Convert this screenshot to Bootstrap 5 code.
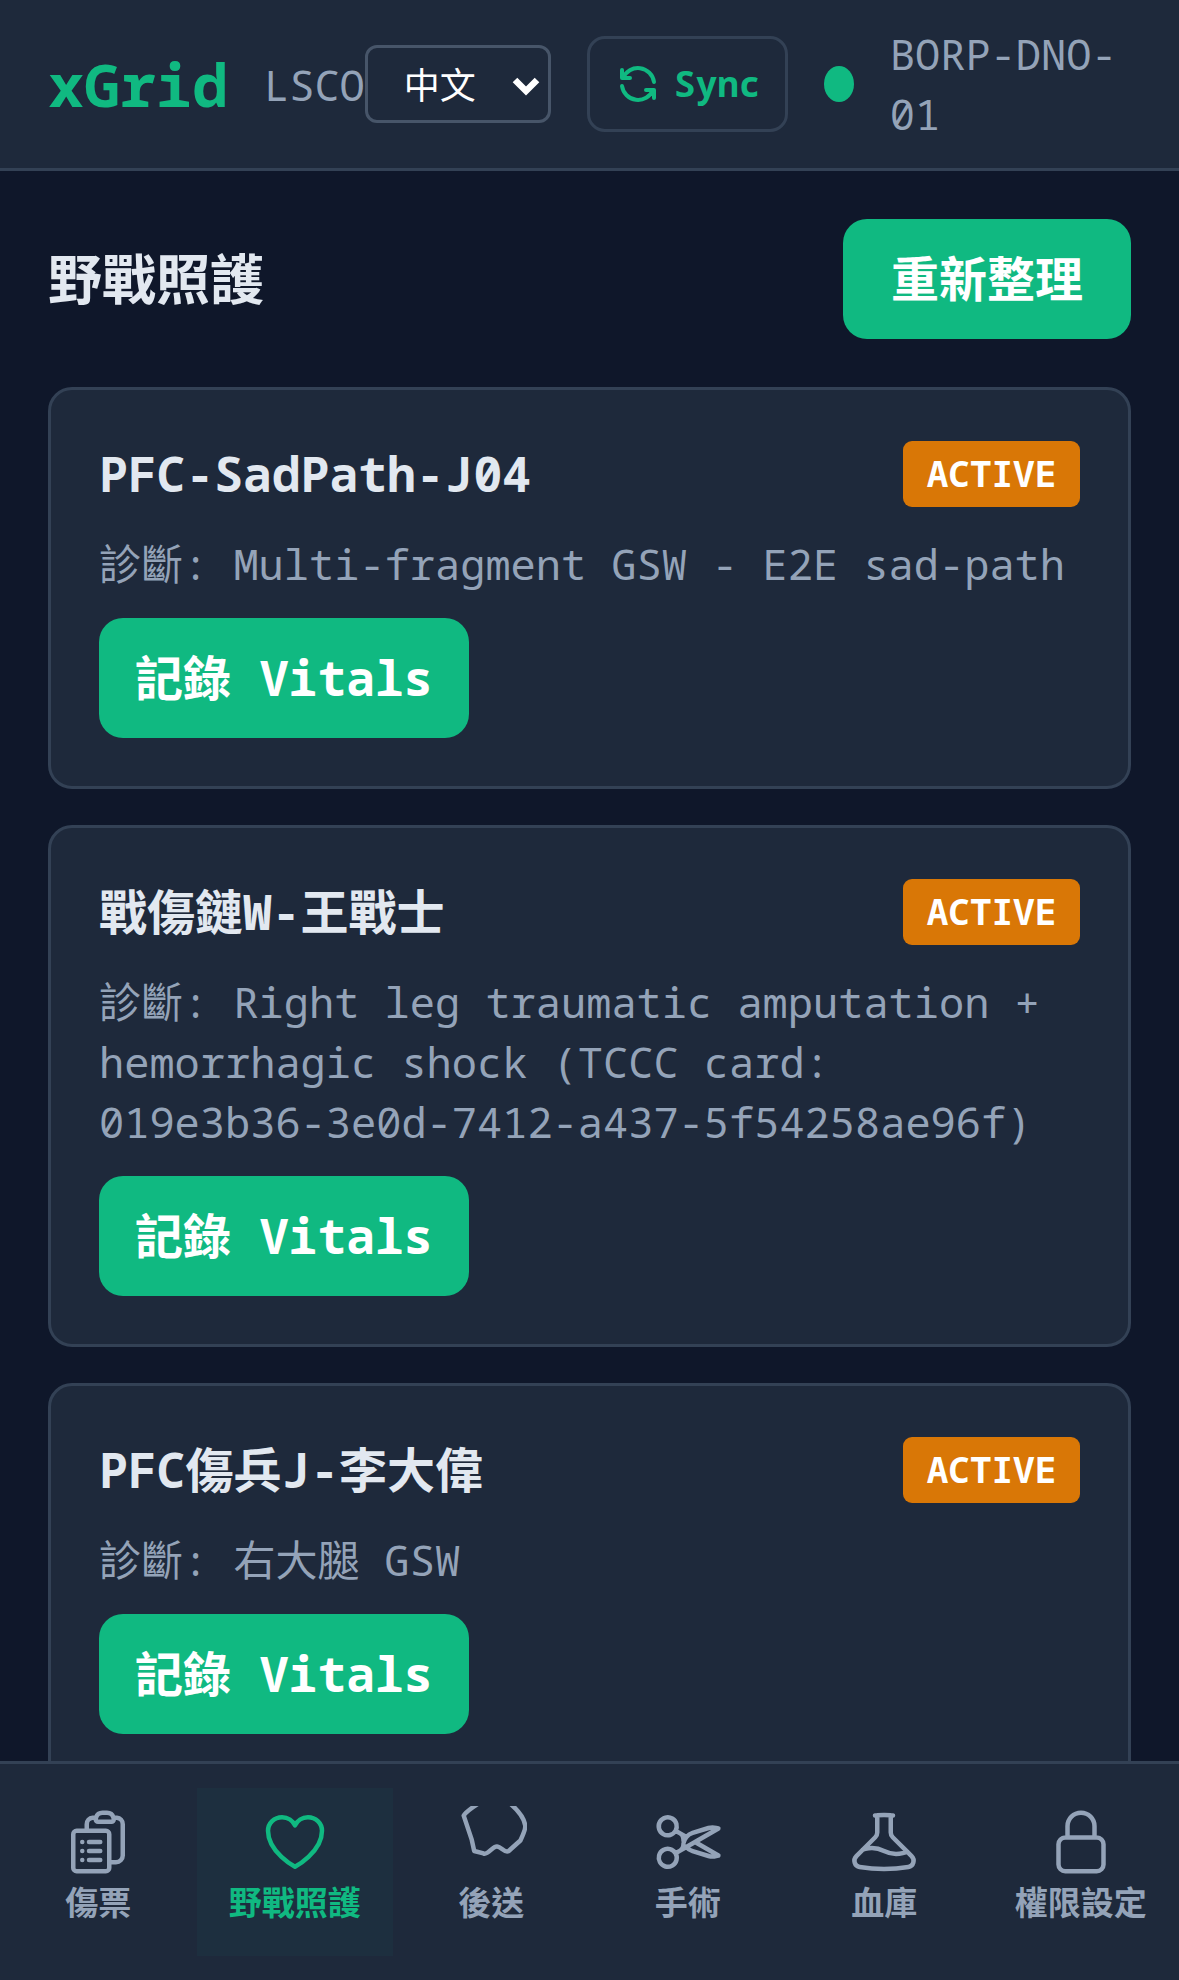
<!DOCTYPE html>
<html lang="zh-Hant"><head><meta charset="utf-8">
<link href="https://cdn.jsdelivr.net/npm/bootstrap@5.3.0/dist/css/bootstrap.min.css" rel="stylesheet">
<style>
html,body{height:100%;}
body{background:#0f172a;color:#e2e8f0;font-family:"Noto Sans Mono","Noto Sans Mono CJK TC","Noto Sans CJK TC",monospace;overflow:hidden;}
.app-shell{height:1980px;display:flex;flex-direction:column;}
.top-bar{height:171px;flex:none;background:#1e293b;border-bottom:3px solid #334155;padding:0 48px;}
.brand-side{gap:36px;flex:none;}
.brand-name{color:#10b981;font-size:60px;font-weight:700;line-height:1;}
.site-code{color:#94a3b8;font-size:42px;}
.ctrl-side{gap:36px;flex:1;min-width:0;}
.lang-wrap{position:relative;flex:none;}
.lang-pick{width:186px;height:78px;background-color:#1e293b;background-image:none;border:3px solid #475569;border-radius:12px;color:#fff;font-size:36px;padding:0 36px;-webkit-appearance:none;appearance:none;font-family:"Noto Sans CJK TC",sans-serif;line-height:1.2;}
.lang-caret{position:absolute;right:11px;top:31px;width:28px;height:20px;pointer-events:none;}
.sync-btn{width:201px;height:96px;flex:none;border:3px solid #334155;border-radius:18px;color:#10b981;font-size:36px;font-weight:700;gap:12px;background:transparent;padding:0;}
.sync-btn:hover{color:#10b981;border-color:#334155;}
.conn-dot{width:30px;height:36px;border-radius:50%;background:#10b981;flex:none;}
.node-name{color:#94a3b8;font-size:42px;line-height:60px;min-width:0;}
.main-scroll{flex:1;min-height:0;overflow:hidden;padding:48px;}
.page-title{font-size:54px;font-weight:700;margin:0;color:#e2e8f0;}
.action-btn{background:#10b981;border:0;color:#fff;font-weight:700;font-size:48px;border-radius:24px;height:120px;padding:0 36px;line-height:1;}
.action-btn:hover{background:#10b981;color:#fff;}
.refresh-btn{padding:0 48px;}
.care-card{background:#1e293b;border:3px solid #334155;border-radius:24px;padding:48px;margin-bottom:36px;}
.care-head{margin-bottom:24px;}
.care-name{font-size:48px;font-weight:700;color:#e2e8f0;margin:0;line-height:72px;}
.state-tag{background:#d97706;color:#fff;font-size:36px;font-weight:700;border-radius:9px;height:66px;width:177px;}
.diag-text{color:#94a3b8;font-size:42px;line-height:60px;margin:0 0 24px;}
.bottom-bar{flex:none;height:219px;background:#1e293b;border-top:3px solid #334155;padding:24px 0;}
.tab-item{flex:1 1 0;height:168px;padding-top:18px;color:#94a3b8;font-size:33px;font-weight:700;}
.tab-item svg{display:block;flex:none;}
.tab-on{background:rgba(16,185,129,.05);color:#10b981;}
.tab-label{line-height:49.5px;white-space:nowrap;}
</style></head><body>
<div class="app-shell">
<header class="top-bar d-flex align-items-center">
 <div class="brand-side d-flex align-items-center">
  <span class="brand-name">xGrid</span><span class="site-code">LSCO</span>
 </div>
 <div class="ctrl-side d-flex align-items-center">
 <div class="lang-wrap"><select class="lang-pick form-select"><option>中文</option></select>
  <svg class="lang-caret" viewBox="0 0 28 20"><path d="M3 4l11 11L25 4" fill="none" stroke="#fff" stroke-width="6.5"/></svg></div>
 <button class="sync-btn btn d-flex align-items-center justify-content-center">
  <svg width="48" height="48" viewBox="0 0 24 24" fill="none" stroke="#10b981" stroke-width="2" stroke-linecap="round" stroke-linejoin="round"><path d="M20 11a8.1 8.1 0 0 0-15.5-2m-.5-4v4h4"/><path d="M4 13a8.1 8.1 0 0 0 15.5 2m.5 4v-4h-4"/></svg>
  <span>Sync</span></button>
 <span class="conn-dot"></span>
 <span class="node-name">BORP-DNO-01</span>
 </div>
</header>
<main class="main-scroll">
 <div class="d-flex justify-content-between align-items-center mb-5">
  <h1 class="page-title">野戰照護</h1><button class="action-btn refresh-btn btn">重新整理</button>
 </div>
 <section class="care-card">
  <div class="care-head d-flex justify-content-between align-items-center"><h2 class="care-name">PFC-SadPath-J04</h2><span class="state-tag d-flex align-items-center justify-content-center">ACTIVE</span></div>
  <p class="diag-text">診斷: Multi-fragment GSW - E2E sad-path</p>
  <button class="action-btn btn">記錄 Vitals</button>
 </section>
 <section class="care-card">
  <div class="care-head d-flex justify-content-between align-items-center"><h2 class="care-name">戰傷鏈W-王戰士</h2><span class="state-tag d-flex align-items-center justify-content-center">ACTIVE</span></div>
  <p class="diag-text">診斷: Right leg traumatic amputation + hemorrhagic shock (TCCC card: 019e3b36-3e0d-7412-a437-5f54258ae96f)</p>
  <button class="action-btn btn">記錄 Vitals</button>
 </section>
 <section class="care-card">
  <div class="care-head d-flex justify-content-between align-items-center"><h2 class="care-name">PFC傷兵J-李大偉</h2><span class="state-tag d-flex align-items-center justify-content-center">ACTIVE</span></div>
  <p class="diag-text">診斷: 右大腿 GSW</p>
  <button class="action-btn btn">記錄 Vitals</button>
 </section>
</main>
<nav class="bottom-bar d-flex">
 <div class="tab-item d-flex flex-column align-items-center"><svg width="72" height="72" viewBox="0 0 24 24" fill="none" stroke="#94a3b8" stroke-width="1.5" stroke-linecap="round" stroke-linejoin="round"><path d="M9 12h3.75M9 15h3.75M9 18h3.75m3 .75H18a2.25 2.25 0 002.25-2.25V6.108c0-1.135-.845-2.098-1.976-2.192a48.424 48.424 0 00-1.123-.08m-5.801 0c-.065.21-.1.433-.1.664 0 .414.336.75.75.75h4.5a.75.75 0 00.75-.75 2.25 2.25 0 00-.1-.664m-5.8 0A2.251 2.251 0 0113.5 2.25H15c1.012 0 1.867.668 2.15 1.586m-5.8 0c-.376.023-.75.05-1.124.08C9.095 4.01 8.25 4.973 8.25 6.108V8.25m0 0H4.875c-.621 0-1.125.504-1.125 1.125v11.25c0 .621.504 1.125 1.125 1.125h9.75c.621 0 1.125-.504 1.125-1.125V9.375c0-.621-.504-1.125-1.125-1.125H8.25zM6.75 12h.008v.008H6.75V12zm0 3h.008v.008H6.75V15zm0 3h.008v.008H6.75V18z"/></svg><span class="tab-label">傷票</span></div>
 <div class="tab-item tab-on d-flex flex-column align-items-center"><svg width="72" height="72" viewBox="0 0 24 24" fill="none" stroke="#10b981" stroke-width="1.5" stroke-linecap="round" stroke-linejoin="round"><path d="M21 8.25c0-2.485-2.099-4.5-4.688-4.5-1.935 0-3.597 1.126-4.312 2.733-.715-1.607-2.377-2.733-4.313-2.733C5.1 3.75 3 5.765 3 8.25c0 7.22 9 12 9 12s9-4.78 9-12z"/></svg><span class="tab-label">野戰照護</span></div>
 <div class="tab-item d-flex flex-column align-items-center"><svg width="72" height="72" viewBox="0 0 24 24" fill="none" stroke="#94a3b8" stroke-width="1.5" stroke-linecap="round" stroke-linejoin="round"><path d="M7.5-.6C5 1 3.4 2.4 2.9 3.2L5.6 11.3 6.4 15 9.5 15.8C11 16.6 12.5 13.2 14.1 13.5 15.5 13.7 16.5 15.8 17.9 15L21.8 11.5C23 9 23.6 7.5 23.4 6.5 23 3.5 20.5 1 18.4-.8"/></svg><span class="tab-label">後送</span></div>
 <div class="tab-item d-flex flex-column align-items-center"><svg width="72" height="72" viewBox="0 0 24 24" fill="none" stroke="#94a3b8" stroke-width="1.5" stroke-linecap="round" stroke-linejoin="round"><path d="M7.848 8.25l1.536.887M7.848 8.25a3 3 0 11-5.196-3 3 3 0 015.196 3zm1.536.887a2.165 2.165 0 011.083 1.839c.005.351.054.695.14 1.024M9.384 9.137l2.077 1.199M7.848 15.75l1.536-.887m-1.536.887a3 3 0 11-5.196 3 3 3 0 015.196-3zm1.536-.887a2.165 2.165 0 001.083-1.838c.005-.352.054-.695.14-1.025m-1.223 2.863l2.077-1.199m0-3.328a4.323 4.323 0 012.068-1.379l5.325-1.628a4.5 4.5 0 012.48-.044l.803.215-7.794 4.5m-2.882-1.664A4.331 4.331 0 0010.607 12m3.736 0l7.794 4.5-.802.215a4.5 4.5 0 01-2.48-.043l-5.326-1.629a4.324 4.324 0 01-2.068-1.379M14.343 12l-2.882 1.664"/></svg><span class="tab-label">手術</span></div>
 <div class="tab-item d-flex flex-column align-items-center"><svg width="72" height="72" viewBox="0 0 24 24" fill="none" stroke="#94a3b8" stroke-width="1.5" stroke-linecap="round" stroke-linejoin="round"><path d="M9.75 3.104v5.714a2.25 2.25 0 01-.659 1.591L5 14.5M9.75 3.104c-.251.023-.501.05-.75.082m.75-.082a24.301 24.301 0 014.5 0m0 0v5.714c0 .597.237 1.17.659 1.591L19.8 15.3M14.25 3.104c.251.023.501.05.75.082M19.8 15.3l-1.57.393A9.065 9.065 0 0112 15a9.065 9.065 0 00-6.23-.693L5 14.5m14.8.8l1.402 1.402c1.232 1.232.65 3.318-1.067 3.611A48.309 48.309 0 0112 21c-2.773 0-5.491-.235-8.135-.687-1.718-.293-2.3-2.379-1.067-3.61L5 14.5"/></svg><span class="tab-label">血庫</span></div>
 <div class="tab-item d-flex flex-column align-items-center"><svg width="72" height="72" viewBox="0 0 24 24" fill="none" stroke="#94a3b8" stroke-width="1.5" stroke-linecap="round" stroke-linejoin="round"><path d="M16.5 10.5V6.75a4.5 4.5 0 10-9 0v3.75m-.75 11.25h10.5a2.25 2.25 0 002.25-2.25v-6.75a2.25 2.25 0 00-2.25-2.25H6.75a2.25 2.25 0 00-2.25 2.25v6.75a2.25 2.25 0 002.25 2.25z"/></svg><span class="tab-label">權限設定</span></div>
</nav>
</div>
<script src="https://cdn.jsdelivr.net/npm/bootstrap@5.3.0/dist/js/bootstrap.bundle.min.js"></script>
</body></html>
